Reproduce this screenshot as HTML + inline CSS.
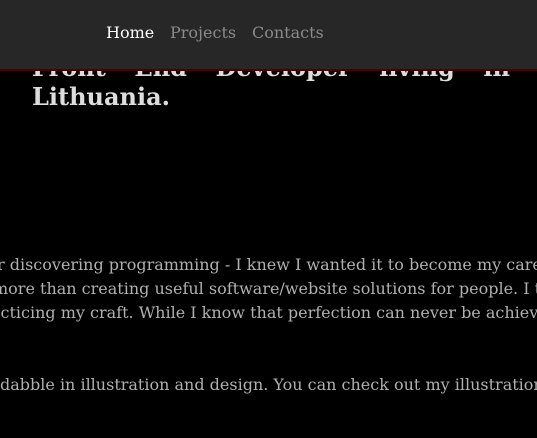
<!DOCTYPE html>
<html><head><style>
html,body{margin:0;padding:0;background:#000;width:537px;height:438px;overflow:hidden;position:relative;font-family:"DejaVu Serif","Liberation Serif",serif}
.hdr{position:absolute;left:0;top:0;width:537px;height:69px;background:#272727;border-bottom:2px solid #4a0000;z-index:2}
.nav{position:absolute;top:23px;font-size:16px;color:#8a8a8a}
h1{position:absolute;left:32px;top:53px;width:478px;margin:0;font-size:24px;line-height:29px;font-weight:bold;color:#ddd;text-align:justify;text-align-last:left;z-index:1}
.l{position:absolute;white-space:nowrap;font-size:16px;color:#b0b0b0;line-height:24px}
</style></head><body>
<div class="hdr">
<span class="nav" style="left:106px;color:#fff">Home</span>
<span class="nav" style="left:170px">Projects</span>
<span class="nav" style="left:252px">Contacts</span>
</div>
<h1>Front End Developer living in Lithuania.</h1>
<div class="l" style="left:-3px;top:253px">r discovering programming - I knew I wanted it to become my career.</div>
<div class="l" style="left:-7px;top:277px">more than creating useful software/website solutions for people. I thrive</div>
<div class="l" style="left:-9px;top:301px">acticing my craft. While I know that perfection can never be achieved</div>
<div class="l" style="left:0px;top:373px">dabble in illustration and design. You can check out my illustrations</div>
</body></html>
